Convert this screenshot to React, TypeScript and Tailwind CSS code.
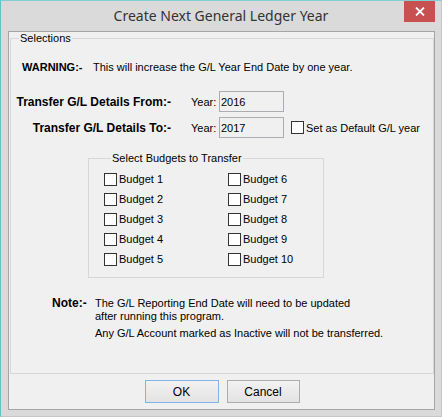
import React from 'react';

const budgets = [
  ['Budget 1', 'Budget 6'],
  ['Budget 2', 'Budget 7'],
  ['Budget 3', 'Budget 8'],
  ['Budget 4', 'Budget 9'],
  ['Budget 5', 'Budget 10'],
];

const CheckBox: React.FC<{ label: string }> = ({ label }) => (
  <label className="flex items-center h-[20px]">
    <span className="w-[13px] h-[13px] border border-[#333333] bg-white shrink-0" />
    <span className="ml-[2px]">{label}</span>
  </label>
);

const App: React.FC = () => {
  return (
    <div
      className="w-[442px] h-[417px] bg-[#dadada] border border-[#c6c6c6] border-l-[#5cc3c9] border-t-[#7fd0d4] flex flex-col text-black text-[11px] leading-[14px] select-none"
      style={{ fontFamily: '"Liberation Sans", Arial, sans-serif' }}
    >
      {/* title bar */}
      <div className="relative h-[30px] flex items-center justify-center shrink-0">
        <span
          className="text-[14px] text-[#333333] -mt-[1px]"
          style={{ fontFamily: '"Noto Sans", "Open Sans", sans-serif' }}
        >
          Create Next General Ledger Year
        </span>
        <button className="absolute right-[6px] top-0 w-[31px] h-[21px] bg-[#c75050] flex items-center justify-center">
          <svg width="10" height="9" viewBox="0 0 10 9">
            <path d="M1 0.5 L9 8.5 M9 0.5 L1 8.5" stroke="white" strokeWidth="1.8" />
          </svg>
        </button>
      </div>

      {/* client area */}
      <div className="ml-[7px] w-[427px] h-[379px] border border-[#a5a5a5] bg-[#f0f0f0] flex flex-col">
        <fieldset className="ml-[1px] w-[424px] h-[342px] border border-[#d7d7d7]">
          <legend className="ml-[8px] px-[1px] leading-[12px]">Selections</legend>

          <div className="flex items-center mt-[16px] ml-[11px]">
            <span className="font-bold w-[71px]">WARNING:-</span>
            <span>This will increase the G/L Year End Date by one year.</span>
          </div>

          <div className="flex items-center mt-[17px] h-[21px]">
            <span className="font-bold text-[12px] w-[160px] text-right">Transfer G/L Details From:-</span>
            <span className="ml-[20px] w-[28px]">Year:</span>
            <div className="w-[65px] h-[21px] border border-[#abadb3] bg-[#f0f0f0] pl-[1px] flex items-center">2016</div>
          </div>

          <div className="flex items-center mt-[5px] h-[21px]">
            <span className="font-bold text-[12px] w-[160px] text-right">Transfer G/L Details To:-</span>
            <span className="ml-[20px] w-[28px]">Year:</span>
            <div className="w-[65px] h-[21px] border border-[#abadb3] bg-[#f0f0f0] pl-[1px] flex items-center">2017</div>
            <label className="flex items-center ml-[7px]">
              <span className="w-[13px] h-[13px] border border-[#333333] bg-white" />
              <span className="ml-[2px]">Set as Default G/L year</span>
            </label>
          </div>

          <fieldset className="ml-[77px] mt-[13px] w-[236px] border border-[#d7d7d7] pt-[4px] pb-[8px] pl-[15px]">
            <legend className="ml-[7px] px-[1px]">Select Budgets to Transfer</legend>
            <div className="grid grid-cols-[124px_1fr]">
              {budgets.map(([a, b]) => (
                <React.Fragment key={a}>
                  <CheckBox label={a} />
                  <CheckBox label={b} />
                </React.Fragment>
              ))}
            </div>
          </fieldset>

          <div className="flex mt-[19px] leading-[13px]">
            <span className="font-bold text-[12px] ml-[41px] w-[43px]">Note:-</span>
            <div className="flex flex-col">
              <span className="w-[270px]">The G/L Reporting End Date will need to be updated after running this program.</span>
              <span className="mt-[4px]">Any G/L Account marked as Inactive will not be transferred.</span>
            </div>
          </div>
        </fieldset>

        <div className="flex justify-center gap-[8px] mt-[6px] pl-[1px]">
          <button className="w-[74px] h-[23px] border border-[#7eb4ea] bg-gradient-to-b from-[#f2f2f2] to-[#e3e3e3] text-[12px]">
            OK
          </button>
          <button className="w-[73px] h-[23px] border border-[#acacac] bg-gradient-to-b from-[#f2f2f2] to-[#e3e3e3] text-[12px]">
            Cancel
          </button>
        </div>
      </div>
    </div>
  );
};

export default App;
